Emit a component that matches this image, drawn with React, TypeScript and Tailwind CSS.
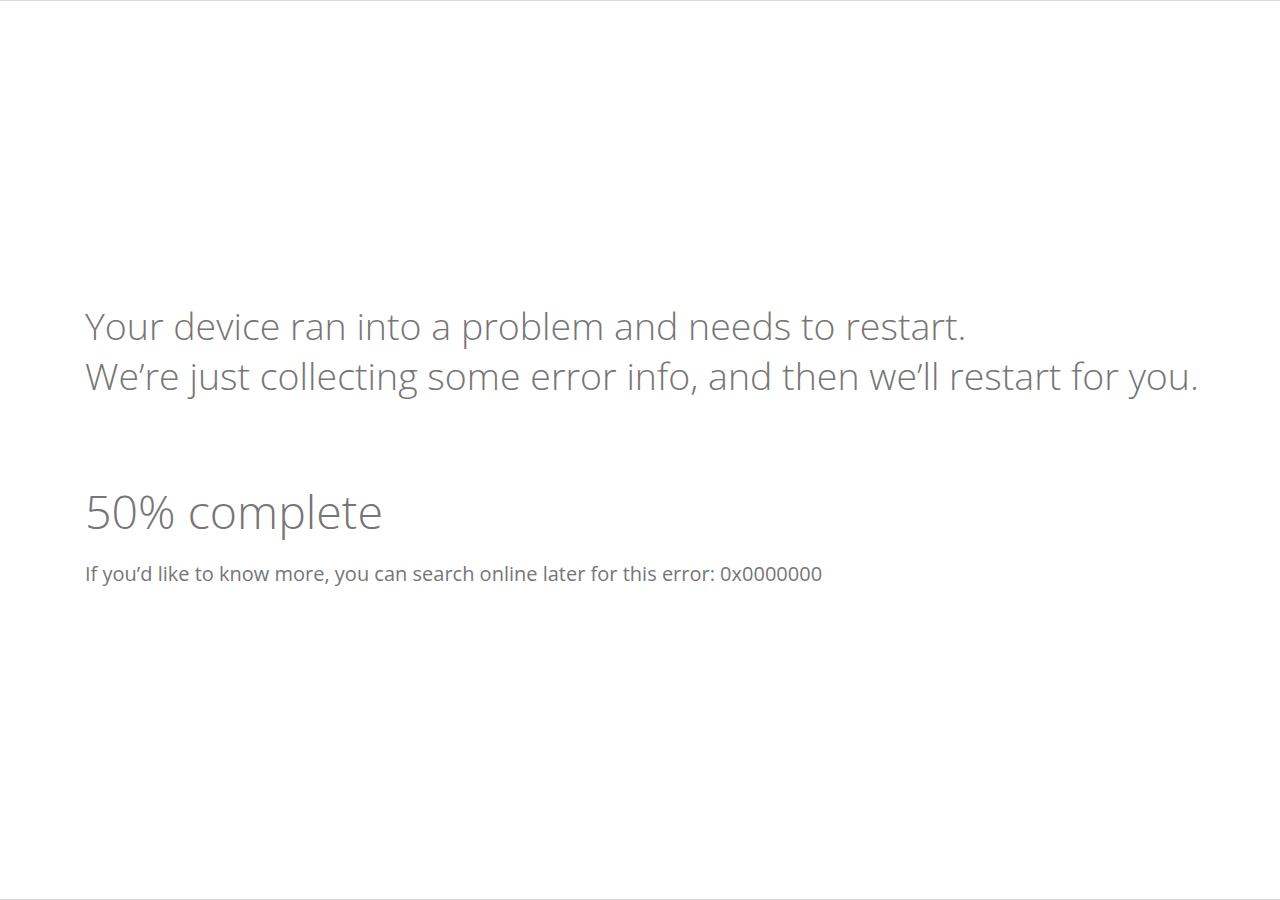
import React from 'react';

const App = () => {
  return (
    <div
      className="w-[1280px] h-[900px] bg-white border-t border-b border-[#dcdcdc] flex flex-col text-[#767676]"
      style={{ fontFamily: '"Open Sans", "Noto Sans", sans-serif' }}
    >
      <div className="pl-[85px] pt-[300px]">
        <p className="text-[37.5px] leading-[50px] font-light">
          Your device ran into a problem and needs to restart.
          <br />
          We’re just collecting some error info, and then we’ll restart for you.
        </p>
        <p className="mt-[80px] text-[46.5px] leading-[60px] font-light">50% complete</p>
        <p className="mt-[19px] text-[20px] leading-[28px]">
          If you’d like to know more, you can search online later for this error: 0x0000000
        </p>
      </div>
    </div>
  );
};

export default App;
